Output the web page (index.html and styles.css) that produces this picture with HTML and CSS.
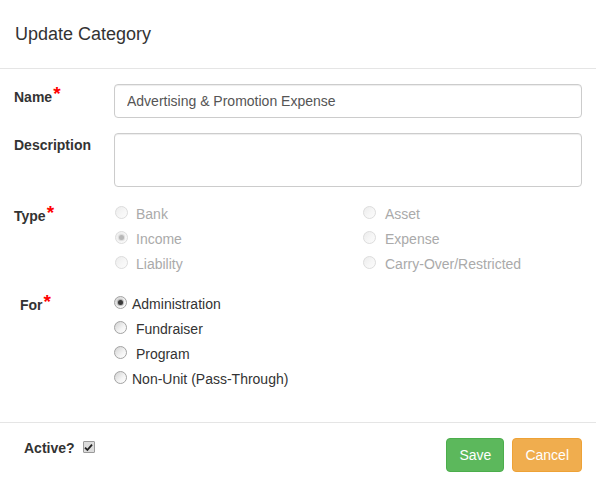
FILE: index.html
```html
<!DOCTYPE html>
<html>
<head>
<meta charset="utf-8">
<link rel="stylesheet" href="styles.css">
</head>
<body>
<div class="modal">
  <div class="modal-header">
    <h4 class="modal-title">Update Category</h4>
  </div>
  <div class="modal-body">
    <div class="form-row">
      <label class="control-label">Name<span class="req">*</span></label>
      <div class="controls">
        <input class="form-control" type="text" value="Advertising &amp; Promotion Expense">
      </div>
    </div>
    <div class="form-row">
      <label class="control-label">Description</label>
      <div class="controls">
        <textarea class="form-control textarea"></textarea>
      </div>
    </div>
    <div class="form-row radio-row">
      <label class="control-label radio-label">Type<span class="req">*</span></label>
      <div class="controls type-grid">
        <div class="radio disabled"><input type="radio" class="rb" disabled><span>Bank</span></div>
        <div class="radio disabled right"><input type="radio" class="rb" disabled><span>Asset</span></div>
        <div class="radio disabled"><input type="radio" class="rb" disabled checked><span>Income</span></div>
        <div class="radio disabled right"><input type="radio" class="rb" disabled><span>Expense</span></div>
        <div class="radio disabled"><input type="radio" class="rb" disabled><span>Liability</span></div>
        <div class="radio disabled right"><input type="radio" class="rb" disabled><span>Carry-Over/Restricted</span></div>
      </div>
    </div>
    <div class="form-row radio-row for-row">
      <label class="control-label radio-label for-label">For<span class="req">*</span></label>
      <div class="controls for-list">
        <div class="radio tight"><input type="radio" name="for" class="rb" checked><span>Administration</span></div>
        <div class="radio tight"><input type="radio" name="for" class="rb"><span>&nbsp;Fundraiser</span></div>
        <div class="radio tight"><input type="radio" name="for" class="rb"><span>&nbsp;Program</span></div>
        <div class="radio tight"><input type="radio" name="for" class="rb"><span>Non-Unit (Pass-Through)</span></div>
      </div>
    </div>
  </div>
  <div class="modal-footer">
    <div class="active">
      <span class="active-label">Active?</span>
      <span class="checkbox"><svg width="9" height="9" viewBox="0 0 9 9"><path d="M1 4.6 L3.4 7 L8 1.6" fill="none" stroke="#222" stroke-width="1.8"/></svg></span>
    </div>
    <div class="buttons">
      <button class="btn btn-success">Save</button>
      <button class="btn btn-warning">Cancel</button>
    </div>
  </div>
</div>
</body>
</html>
```
FILE: styles.css
```css
* { box-sizing: border-box; }
html, body { margin: 0; padding: 0; background: #fff; }
body {
  font-family: "Liberation Sans", Arial, sans-serif;
  font-size: 14px;
  line-height: 20px;
  color: #333;
}
.modal { width: 596px; height: 486px; background: #fff; }
.modal-header {
  height: 69px;
  padding: 21px 15px;
  border-bottom: 1px solid #e5e5e5;
}
.modal-title {
  margin: 0;
  font-size: 18px;
  font-weight: normal;
  line-height: 26px;
  color: #333;
}
.modal-body {
  padding: 15px 14px 0 14px;
  height: 353px;
}
.form-row {
  display: flex;
  margin-bottom: 15px;
}
.control-label {
  width: 100px;
  flex: none;
  font-weight: bold;
  padding-top: 2px;
  color: #333;
}
.req {
  color: #f00;
  font-size: 19px;
  font-weight: bold;
  position: relative;
  top: -2px;
  margin-left: 1px;
}
.controls { flex: 1; }
.form-control {
  display: block;
  width: 100%;
  height: 34px;
  padding: 6px 12px;
  font-family: inherit;
  font-size: 14px;
  line-height: 20px;
  color: #555;
  background: #fff;
  border: 1px solid #ccc;
  border-radius: 4px;
  box-shadow: inset 0 1px 1px rgba(0,0,0,.075);
  outline: none;
}
.textarea { height: 54px; resize: none; }
.radio-row { margin-top: 14px; margin-bottom: 0; }
.for-row { margin-top: 14px; }
.radio-label { padding-top: 3px; }
.for-label { padding-left: 6px; padding-top: 4px; }
.type-grid {
  display: grid;
  grid-template-columns: 248px 1fr;
  margin-top: -1px;
}
.for-list { margin-top: 1px; }
.radio {
  display: flex;
  align-items: center;
  height: 25px;
  padding-left: 1px;
}
.radio span { margin-left: 8px; }
.radio.right span { margin-left: 9px; }
.radio.tight { padding-left: 0; }
.radio.tight span { margin-left: 5px; }
.radio.disabled span { color: #aaa; }
.rb {
  -webkit-appearance: none;
  appearance: none;
  width: 13px;
  height: 13px;
  margin: 0;
  flex: none;
  border-radius: 50%;
  border: 1px solid #a4a4a4;
  background-color: #e6e6e6;
  background-image: linear-gradient(135deg, #d2d2d2 0%, #f4f4f4 60%, #ffffff 100%);
  position: relative;
  top: -1px;
}
.rb:checked::after {
  content: "";
  position: absolute;
  left: 3px;
  top: 3px;
  width: 5px;
  height: 5px;
  border-radius: 50%;
  background: #3a3a3a;
  box-shadow: 0 0 1px 1px rgba(60,60,60,.35);
}
.rb:disabled {
  border-color: #dedede;
  background-image: linear-gradient(135deg, #ececec 0%, #f7f7f7 60%, #fbfbfb 100%);
}
.rb:disabled:checked::after {
  background: #b8b8b8;
  box-shadow: 0 0 1px 1px rgba(180,180,180,.4);
}
.modal-footer {
  border-top: 1px solid #e5e5e5;
  padding: 15px 14px 15px 24px;
  display: flex;
  justify-content: space-between;
  align-items: flex-start;
}
.active {
  display: flex;
  align-items: center;
  height: 20px;
}
.active-label { font-weight: bold; }
.checkbox {
  display: inline-flex;
  align-items: center;
  justify-content: center;
  width: 12px;
  height: 12px;
  margin-left: 8px;
  border: 1px solid #9b9b9b;
  background: #dcdcdc;
  border-radius: 1px;
  position: relative;
  top: -1px;
}
.buttons { display: flex; gap: 8px; }
.btn {
  height: 34px;
  padding: 6px 12px;
  font-family: inherit;
  font-size: 14px;
  line-height: 20px;
  color: #fff;
  border: 1px solid transparent;
  border-radius: 4px;
  cursor: pointer;
}
.btn-success { background: #5cb85c; border-color: #4cae4c; }
.btn-warning { background: #f0ad4e; border-color: #eea236; }
```
